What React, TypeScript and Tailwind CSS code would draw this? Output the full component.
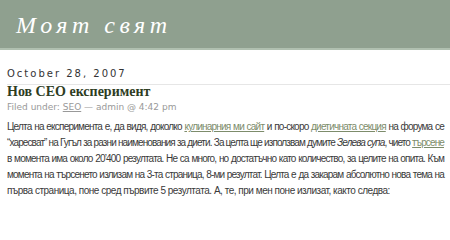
import React from "react";

const lines: { track: string; node: React.ReactNode }[] = [
  {
    track: "tracking-[-0.78px] text-justify [text-align-last:justify]",
    node: (
      <>
        Целта на експеримента е, да видя, доколко <a className="text-[#7d8c6b] underline">кулинарния ми сайт</a> и по-скоро{" "}
        <a className="text-[#7d8c6b] underline">диетичната секция</a> на форума се
      </>
    ),
  },
  {
    track: "tracking-[-0.88px] text-justify [text-align-last:justify]",
    node: (
      <>
        “харесват” на Гугъл за разни наименования за диети. За целта ще използвам думите <em>Зелева супа</em>, чието{" "}
        <a className="text-[#7d8c6b] underline">търсене</a>
      </>
    ),
  },
  {
    track: "tracking-[-0.8px] text-justify [text-align-last:justify]",
    node: <>в момента има около 20’400 резултата. Не са много, но достатъчно като количество, за целите на опита. Към</>,
  },
  {
    track: "tracking-[-0.8px] text-justify [text-align-last:justify]",
    node: <>момента на търсенето излизам на 3-та страница, 8-ми резултат. Целта е да закарам абсолютно нова тема на</>,
  },
  {
    track: "tracking-[-0.48px]",
    node: <>първа страница, поне сред първите 5 резултата. А, те, при мен поне излизат, както следва:</>,
  },
];

export default function App() {
  return (
    <div className="w-[450px] h-[200px] overflow-hidden bg-white">
      <header className="h-[50px] bg-[#8fa08f] border-b-2 border-[#b0c0b0] flex items-center pl-4">
        <h1 className="text-white italic text-[24px] tracking-[4.5px] font-['Liberation_Serif',serif] pt-[2px]">Моят свят</h1>
      </header>
      <main className="pl-[7px] pt-[18px]">
        <div className="text-[10px] tracking-[2px] text-[#333] font-['DejaVu_Sans',sans-serif] leading-[12px]">October 28, 2007</div>
        <div className="mt-[4px] border-t border-[#e6e6e6]" />
        <h2 className="-mt-[1px] text-[14px] font-bold text-[#2e3d1f] font-['Liberation_Serif',serif] leading-[16px]">Нов СЕО експеримент</h2>
        <div className="mt-[1px] text-[9px] text-[#999] font-['DejaVu_Sans',sans-serif] leading-[12px]">
          Filed under: <a className="underline">SEO</a> — admin @ 4:42 pm
        </div>
        <div className="mt-[6px] w-[437px] text-[10px] text-[#3a3a3a] font-['Liberation_Sans',sans-serif] leading-[16px] whitespace-nowrap">
          {lines.map((l, i) => (
            <div key={i} className={l.track}>
              {l.node}
            </div>
          ))}
        </div>
      </main>
    </div>
  );
}
